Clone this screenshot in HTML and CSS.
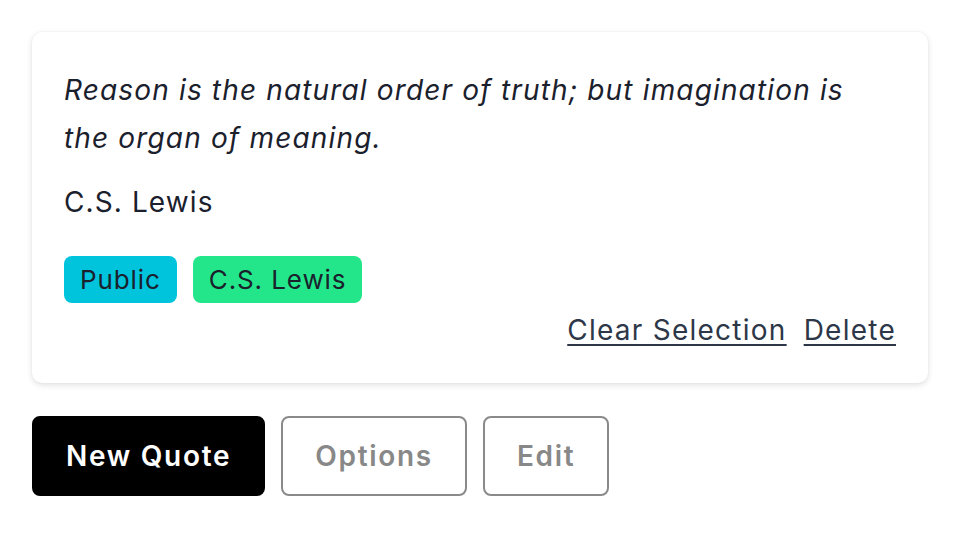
FILE: index.html
```html
<!DOCTYPE html>
<html lang="en">
<head>
<meta charset="utf-8">
<title>Quote</title>
<link rel="stylesheet" href="styles.css">
</head>
<body>
<main class="page">
  <article class="card">
    <p class="quote">Reason is the natural order of truth; but imagination is the organ of meaning.</p>
    <p class="author">C.S. Lewis</p>
    <div class="tags">
      <span class="tag tag-public">Public</span>
      <span class="tag tag-author">C.S. Lewis</span>
    </div>
    <div class="links">
      <a href="#" class="link">Clear Selection</a>
      <a href="#" class="link">Delete</a>
    </div>
  </article>
  <div class="actions">
    <button class="btn btn-primary">New Quote</button>
    <button class="btn btn-outline">Options</button>
    <button class="btn btn-outline">Edit</button>
  </div>
</main>
</body>
</html>
```
FILE: styles.css
```css
* { box-sizing: border-box; }
html, body { margin: 0; padding: 0; background: #fff; }
body {
  font-family: Inter, "Noto Sans", sans-serif;
  color: #1a202c;
}
.page {
  padding: 32px;
  width: 960px;
}
.card {
  width: 896px;
  background: #fff;
  border-radius: 10px;
  padding: 32px 32px 31px 32px;
  box-shadow: 0 2px 6px rgba(0,0,0,0.12), 0 0 2px rgba(0,0,0,0.06);
}
.quote {
  margin: 0;
  font-size: 28px;
  line-height: 48px;
  font-style: italic;
  letter-spacing: 1.15px;
  padding-top: 2px;
}
.author {
  margin: 16px 0 0;
  font-size: 28px;
  line-height: 48px;
  letter-spacing: 1.1px;
}
.tags {
  display: flex;
  gap: 16px;
  margin-top: 30px;
}
.tag {
  display: inline-block;
  height: 47px;
  line-height: 47px;
  padding: 0 16px;
  border-radius: 8px;
  font-size: 26px;
  letter-spacing: 0.9px;
  color: #1a202c;
}
.tag-public { background: #00c3dc; }
.tag-author { background: #23e68a; }
.links {
  display: flex;
  justify-content: flex-end;
  gap: 17px;
  margin-top: 5px;
  line-height: 44px;
}
.link {
  font-size: 28px;
  letter-spacing: 1.25px;
  color: #2d3748;
  text-decoration: underline;
  text-decoration-thickness: 2px;
  text-underline-offset: 4px;
}
.actions {
  display: flex;
  gap: 16px;
  margin-top: 33px;
}
.btn {
  font-family: Inter, "Noto Sans", sans-serif;
  font-size: 28px;
  font-weight: 600;
  letter-spacing: 1.7px;
  height: 80px;
  padding: 0 32px;
  border-radius: 8px;
  cursor: pointer;
}
.btn-primary {
  background: #000;
  color: #fff;
  border: 2px solid #000;
}
.btn-outline {
  background: #fff;
  color: #888;
  border: 2px solid #8a8a8a;
}
```
